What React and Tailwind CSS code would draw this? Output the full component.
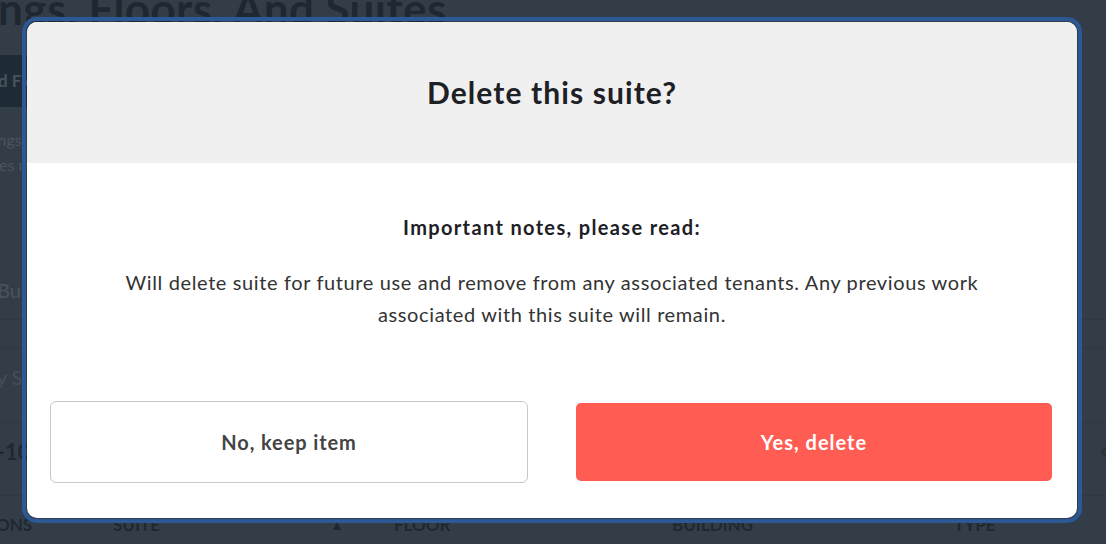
export default function App() {
  return (
    <div className="relative h-[544px] w-[1106px] overflow-hidden bg-[#333d47] font-['Lato','Liberation_Sans',sans-serif]">

      {/* page behind the dim */}
      <div className="text-[#1e2731]">
        <h1 className="-ml-[116px] -mt-[20px] whitespace-nowrap text-[44px] font-bold leading-[56px] tracking-[0.4px] text-[#1f2831]">
          Buildings, Floors, And Suites
        </h1>

        <div className="mt-[19px] flex h-[52px] w-[160px] items-center bg-[#1e2a36] -ml-[80px] pl-[80px]">
          <span className="-ml-[2px] text-[17px] font-bold text-[#48535e]">d Floor</span>
        </div>

        <div className="mt-[20px] text-[16px] leading-[25px] text-[#4a545e]">
          <p className="-ml-[42px]">Buildings and</p>
          <p className="-ml-[28px]">Suites may</p>
        </div>

        <div className="mt-[99px] -ml-[3px] text-[20px] leading-[28px] text-[#4a545e]">Building</div>

        <div className="mt-[15px] border-t border-[#2f3841]" />
        <div className="mt-[28px] border-t border-[#2f3841]" />
        <div className="mt-[14px] -ml-[16px] text-[20px] leading-[28px] text-[#434d57]">By Suite</div>
        <div className="mt-[31px] border-t border-[#2f3841]" />
        <div className="mt-[14px] flex items-center justify-between text-[22px] font-bold leading-[30px] text-[#1f2831]">
          <span className="-ml-[16px]">1-100</span>
          <svg width="10" height="16" viewBox="0 0 10 16" className="-mr-[4px]">
            <path d="M8 2 L2 8 L8 14" fill="none" stroke="#2a333c" strokeWidth="2.5" />
          </svg>
        </div>
        <div className="mt-[28px] border-t border-[#2f3841]" />
        <div className="relative mt-[17px] h-[24px] whitespace-nowrap text-[17px] font-bold uppercase leading-[24px] text-[#1f2831]">
          <div className="flex">
            <span className="-ml-[42px] w-[155px]">Actions</span>
            <span className="w-[217px]">Suite</span>
            <span className="w-[64px] text-[14px]">▲</span>
            <span className="w-[278px]">Floor</span>
            <span className="w-[282px]">Building</span>
            <span>Type</span>
          </div>
        </div>
      </div>

      {/* modal */}
      <div className="absolute inset-0 flex items-start pl-[27px] pt-[22px]">
        <div className="flex h-[496px] w-[1050px] flex-col overflow-hidden rounded-[10px] bg-white outline-4 outline-offset-[1px] outline-[#2c5896]">

          <div className="flex h-[141px] shrink-0 items-center justify-center bg-[#f0f0f0]">
            <h2 className="text-[30px] font-bold tracking-[1.1px] text-[#1d2025]">
              Delete this suite?
            </h2>
          </div>

          <div className="flex flex-1 flex-col items-center pt-[52px] text-center">
            <p className="text-[20px] font-bold leading-[24px] tracking-[1.35px] text-[#1d2025]">
              Important notes, please read:
            </p>
            <p className="mt-[27px] w-[920px] text-[20px] leading-[32px] tracking-[0.62px] text-[#333]">
              Will delete suite for future use and remove from any associated tenants. Any previous work<br />
              associated with this suite will remain.
            </p>
          </div>

          <div className="flex items-center gap-[48px] pb-[35px] pl-[23px] pr-[25px]">
            <button
              type="button"
              className="flex h-[82px] w-[478px] items-center justify-center rounded-[6px] border border-[#c8c8c8] bg-white text-[20px] font-bold tracking-[0.9px] text-[#444]"
            >
              No, keep item
            </button>
            <button
              type="button"
              className="flex h-[78px] w-[476px] items-center justify-center rounded-[5px] bg-[#ff5c53] text-[20px] font-bold tracking-[1px] text-white"
            >
              Yes, delete
            </button>
          </div>

        </div>
      </div>

    </div>
  )
}
